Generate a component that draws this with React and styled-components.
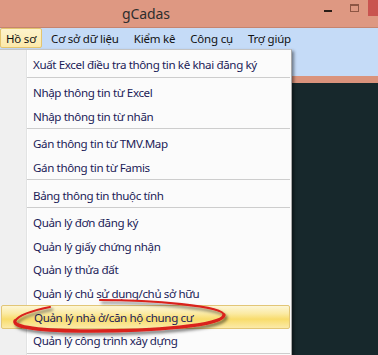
import React from 'react';
import styled, { createGlobalStyle } from 'styled-components';

const GlobalStyle = createGlobalStyle`
  html, body {
    margin: 0;
    padding: 0;
    overflow: hidden;
  }
  body {
    font-family: "Noto Sans", "Open Sans", sans-serif;
  }
`;

const Window = styled.div`
  position: relative;
  width: 378px;
  height: 355px;
  overflow: hidden;
  display: flex;
  flex-direction: column;
  background: #17282c;
`;

const TitleBar = styled.div`
  height: 27px;
  flex: none;
  display: flex;
  align-items: flex-start;
  background: #de9882;
  border-bottom: 1px solid #c5846f;
`;

const Title = styled.div`
  padding-left: 122px;
  padding-top: 4px;
  font-size: 14px;
  line-height: 19px;
  letter-spacing: -0.1px;
  color: #2e2e2e;
`;

const Controls = styled.div`
  margin-left: auto;
  display: flex;
  align-items: flex-start;
`;

const MinButton = styled.div`
  width: 26px;
  height: 22px;
  display: flex;
  align-items: center;
  justify-content: center;
  &::after {
    content: '';
    width: 8px;
    height: 2px;
    background: #2a1d17;
  }
`;

const MaxButton = styled.div`
  width: 26px;
  height: 16px;
  display: flex;
  align-items: center;
  justify-content: center;
  &::after {
    content: '';
    width: 7px;
    height: 5px;
    border: 1px solid #8d5644;
    border-top-width: 2px;
  }
`;

const CloseButton = styled.div`
  width: 10px;
  height: 16px;
  margin-left: 1px;
  background: #c95450;
`;

const MenuBar = styled.div`
  height: 20px;
  flex: none;
  display: flex;
  align-items: stretch;
  background: #c5dbf7;
`;

const MenuItem = styled.div`
  display: flex;
  align-items: center;
  padding: 0 5px;
  margin-right: 3px;
  font-size: 11.5px;
  letter-spacing: -0.2px;
  color: #111;
  border: 1px solid ${p => (p.$open ? '#e4c56f' : 'transparent')};
  border-radius: 2px;
  background: ${p => (p.$open ? 'linear-gradient(#fdf3cc, #fce9aa)' : 'transparent')};
`;

const Toolbar = styled.div`
  height: 28px;
  flex: none;
  background: #c5dbf7;
`;

const Strip = styled.div`
  height: 7px;
  flex: none;
  background: #da937c;
`;

const Workspace = styled.div`
  flex: 1;
  background: #17282c;
`;

const Dropdown = styled.div`
  position: absolute;
  top: 49px;
  left: 0;
  width: 291px;
  padding-top: 3px;
  border-top: 1px solid #c4c4c4;
  border-right: 1px solid #a9a9a9;
  box-shadow: 2px 2px 3px rgba(0, 0, 0, 0.45);
  background:
    linear-gradient(to right, #f0f0f0 0 26px, #e2e3e3 26px 27px, #ffffff 27px 28px, #fbfbfb 28px);
`;

const Item = styled.div`
  height: 23.65px;
  box-sizing: border-box;
  display: flex;
  align-items: center;
  padding-left: 33px;
  font-size: 11.6px;
  letter-spacing: -0.38px;
  color: #1b1b58;
  white-space: nowrap;
  ${p =>
    p.$active &&
    `
    margin: 0 1px;
    padding-left: 32px;
    border: 1px solid #e2c677;
    border-radius: 2px;
    background: linear-gradient(#fdf6d6 0%, #fbeaa2 35%, #f8dc6c 60%, #fbeaa8 100%);
  `}
`;

const Separator = styled.div`
  height: 4px;
  box-sizing: border-box;
  margin-left: 27px;
  margin-right: 1px;
  border-top: 1px solid #cdcdcd;
`;

const Annotation = styled.svg`
  position: absolute;
  left: 0;
  top: 0;
  pointer-events: none;
`;

const menus = ['Hồ sơ', 'Cơ sở dữ liệu', 'Kiểm kê', 'Công cụ', 'Trợ giúp'];

const entries = [
  'Xuất Excel điều tra thông tin kê khai đăng ký',
  '-',
  'Nhập thông tin từ Excel',
  'Nhập thông tin từ nhãn',
  '-',
  'Gán thông tin từ TMV.Map',
  'Gán thông tin từ Famis',
  '-',
  'Bảng thông tin thuộc tính',
  '-',
  'Quản lý đơn đăng ký',
  'Quản lý giấy chứng nhận',
  'Quản lý thửa đất',
  'Quản lý chủ sử dụng/chủ sở hữu',
  'Quản lý nhà ở/căn hộ chung cư',
  'Quản lý công trình xây dựng',
  '-',
];

const App = () => (
  <Window>
    <GlobalStyle />
    <TitleBar>
      <Title>gCadas</Title>
      <Controls>
        <MinButton />
        <MaxButton />
        <CloseButton />
      </Controls>
    </TitleBar>
    <MenuBar>
      {menus.map((m, i) => (
        <MenuItem key={m} $open={i === 0}>{m}</MenuItem>
      ))}
    </MenuBar>
    <Toolbar />
    <Strip />
    <Workspace />

    <Dropdown>
      {entries.map((e, i) =>
        e === '-' ? (
          <Separator key={i} />
        ) : (
          <Item key={i} $active={e.startsWith('Quản lý nhà')}>{e}</Item>
        )
      )}
    </Dropdown>

    <Annotation width="378" height="355" viewBox="0 0 378 355">
      <defs>
        <filter id="pen-shadow" x="-10%" y="-50%" width="120%" height="200%">
          <feDropShadow dx="2" dy="2.5" stdDeviation="1.6" floodColor="#000" floodOpacity="0.55" />
        </filter>
      </defs>
      <g filter="url(#pen-shadow)" fill="none" stroke="#d9201c" strokeLinecap="round">
        <path d="M100 300 C152 300 224 306 224 315" strokeWidth="2.2" />
        <path d="M224 315 C224 326 150 331 90 331 C40 331 12 327 15 321" strokeWidth="3.4" />
        <path d="M15 321 C18 316 30 311 50 307" strokeWidth="2.2" />
      </g>
    </Annotation>
  </Window>
);

export default App;
